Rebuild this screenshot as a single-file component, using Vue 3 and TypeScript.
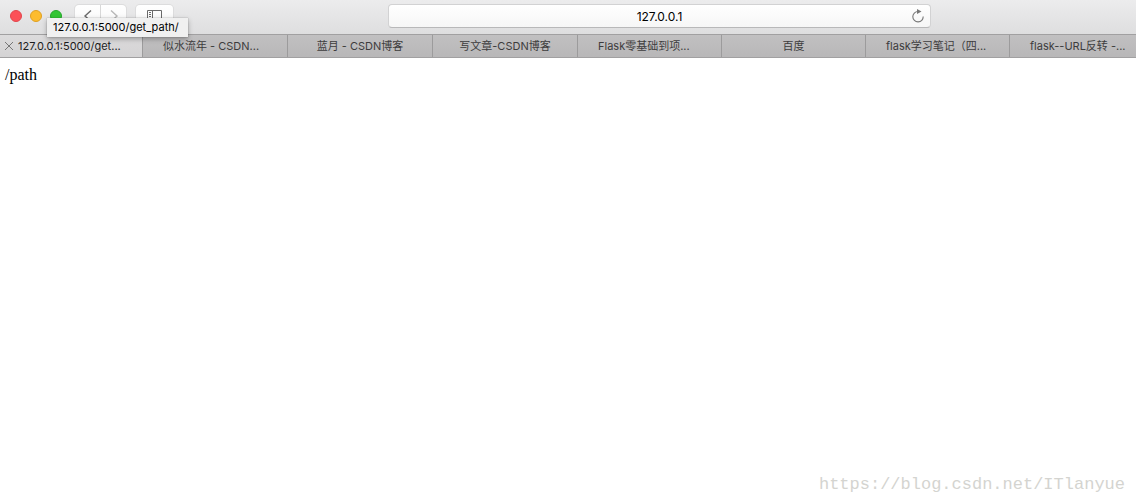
<script setup lang="ts">
import { ref } from 'vue'

interface Tab {
  title: string
  clipped?: boolean
}

const tabs: Tab[] = [
  { title: '127.0.0.1:5000/get...', clipped: true },
  { title: '似水流年 - CSDN...', clipped: true },
  { title: '蓝月 - CSDN博客' },
  { title: '写文章-CSDN博客' },
  { title: 'Flask零基础到项...', clipped: true },
  { title: '百度' },
  { title: 'flask学习笔记（四...', clipped: true },
  { title: 'flask--URL反转 -...', clipped: true },
]

const active = ref(0)
const address = ref('127.0.0.1')
</script>

<template>
  <div class="browser">
    <header class="chrome">
      <div class="toolbar">
        <div class="controls">
          <div class="lights">
            <button class="light red" aria-label="Close window"></button>
            <button class="light yellow" aria-label="Minimize window"></button>
            <button class="light green" aria-label="Zoom window"></button>
          </div>
          <div class="history">
            <button class="tool" aria-label="Back">
              <svg width="10" height="14" viewBox="0 0 10 14"><path d="M8 1.500 2 7l6 5.500" fill="none" stroke="#6a6a6a" stroke-width="1.400" /></svg>
            </button>
            <button class="tool" aria-label="Forward" disabled>
              <svg width="10" height="14" viewBox="0 0 10 14"><path d="M2 1.500 8 7l-6 5.500" fill="none" stroke="#b8b8b8" stroke-width="1.400" /></svg>
            </button>
          </div>
          <button class="tool sidebar" aria-label="Show sidebar">
            <svg width="16" height="12" viewBox="0 0 16 12" fill="none" stroke="#6a6a6a">
              <path d="M.5.5h14v11H.5zM5.500.5v11M2 2.500h2M2 4.500h2M2 6.500h2" />
            </svg>
          </button>
          <div class="tooltip" role="tooltip">127.0.0.1:5000/get_path/</div>
        </div>
        <div class="address">
          <input v-model="address" type="text" aria-label="Address" />
          <button class="reload" aria-label="Reload page">
            <svg width="14" height="14" viewBox="0 0 14 14">
              <path d="M7 2.500A5.200 5.200 0 1 0 12.200 7.500" fill="none" stroke="#777" stroke-width="1.100" />
              <path d="M6 0v5l4.500-2.500z" fill="#777" />
            </svg>
          </button>
        </div>
      </div>
      <nav class="tabs" aria-label="Tabs">
        <button
          v-for="(tab, i) in tabs"
          :key="tab.title"
          class="tab"
          :class="{ active: active === i, clipped: tab.clipped }"
          @click="active = i"
        >
          <svg v-if="active === i" width="10" height="10" viewBox="0 0 10 10"><path d="m1 1 8 8m0-8-8 8" stroke="#777" /></svg>
          <span>{{ tab.title }}</span>
        </button>
      </nav>
    </header>
    <main class="page">/path</main>
    <footer class="watermark">https://blog.csdn.net/ITlanyue</footer>
  </div>
</template>

<style>
body {
  margin: 0;
  background: #fff;
}
</style>

<style scoped>
.browser {
  display: flex;
  flex-direction: column;
  min-height: 100vh;
  overflow: hidden;
  color: #000;
  font-family: Inter, "Noto Sans CJK SC", sans-serif;
}
button,
input {
  box-sizing: border-box;
  margin: 0;
  padding: 0;
  border: 0;
  background: none;
  font: inherit;
}
.toolbar {
  display: grid;
  grid-template-columns: 388fr 543fr 205fr;
  height: 34px;
  background: linear-gradient(#ececed, #dededf);
}
.controls {
  position: relative;
  display: flex;
  align-items: flex-start;
  padding: 5px 0 0 10px;
}
.lights {
  display: flex;
  gap: 8px;
  padding-top: 5px;
  margin-right: 13px;
}
.light {
  width: 12px;
  height: 12px;
  border-radius: 50%;
}
.red {
  background: #fc5158;
  border: 1px solid #e2464c;
}
.yellow {
  background: #fdbc2e;
  border: 1px solid #dfa023;
}
.green {
  background: #33c634;
  border: 1px solid #24a82a;
}
.history {
  display: flex;
  gap: 1px;
  margin-right: 10px;
  border-radius: 4px;
  background: #d8d8d8;
  box-shadow: 0 0 0 1px #dcdcdd, 0 1px 1px #aaa;
  overflow: hidden;
}
.tool {
  display: flex;
  align-items: center;
  justify-content: center;
  width: 25px;
  height: 22px;
  background: linear-gradient(#fff, #f7f7f7);
}
.sidebar {
  width: 37px;
  border-radius: 4px;
  box-shadow: 0 0 0 1px #dcdcdd, 0 1px 1px #aaa;
}
.tooltip {
  position: absolute;
  top: 18px;
  left: 47px;
  z-index: 2;
  box-sizing: border-box;
  height: 19px;
  padding: 0 9px 0 6px;
  background: #f0f0f0;
  box-shadow: 0 0 1px rgba(0, 0, 0, 0.35), 0 2px 5px rgba(0, 0, 0, 0.3);
  font-size: 11px;
  line-height: 19px;
  white-space: nowrap;
}
.address {
  display: flex;
  align-items: center;
  box-sizing: border-box;
  height: 24px;
  margin-top: 4px;
  padding-left: 25px;
  border: 1px solid #d2d2d3;
  border-bottom-color: #b8b8b9;
  border-radius: 4px;
  background: linear-gradient(#fff, #f6f6f6);
}
.address input {
  flex: 1;
  min-width: 0;
  height: 22px;
  font-size: 12px;
  text-align: center;
  outline: none;
}
.reload {
  display: flex;
  justify-content: center;
  width: 25px;
}
.tabs {
  display: grid;
  grid-template-columns: 143fr repeat(3, 145fr) repeat(3, 144fr) 126fr;
  height: 24px;
  box-sizing: border-box;
  border: solid #a1a0a1;
  border-width: 1px 0;
}
.tab {
  display: flex;
  align-items: center;
  justify-content: center;
  min-width: 0;
  overflow: hidden;
  border-right: 1px solid #9c9b9c;
  background: linear-gradient(#c1c0c1, #b8b7b8);
  color: #3d3c3d;
  font-size: 11px;
  line-height: 22px;
  white-space: nowrap;
}
.tab.clipped {
  justify-content: flex-start;
  padding-left: 20px;
}
.tab:last-child {
  border-right: 0;
}
.tab.active {
  gap: 4px;
  padding-left: 4px;
  background: linear-gradient(#dcdbdc, #d4d3d4);
  color: #1c1c1c;
}
.page {
  flex: 1;
  padding: 8px 5px;
  font: 16px/18px "Liberation Serif", serif;
}
.watermark {
  padding: 0 11px 7px;
  color: #d4d4d0;
  font: 17px/24px "Liberation Mono", monospace;
  text-align: right;
}
</style>
